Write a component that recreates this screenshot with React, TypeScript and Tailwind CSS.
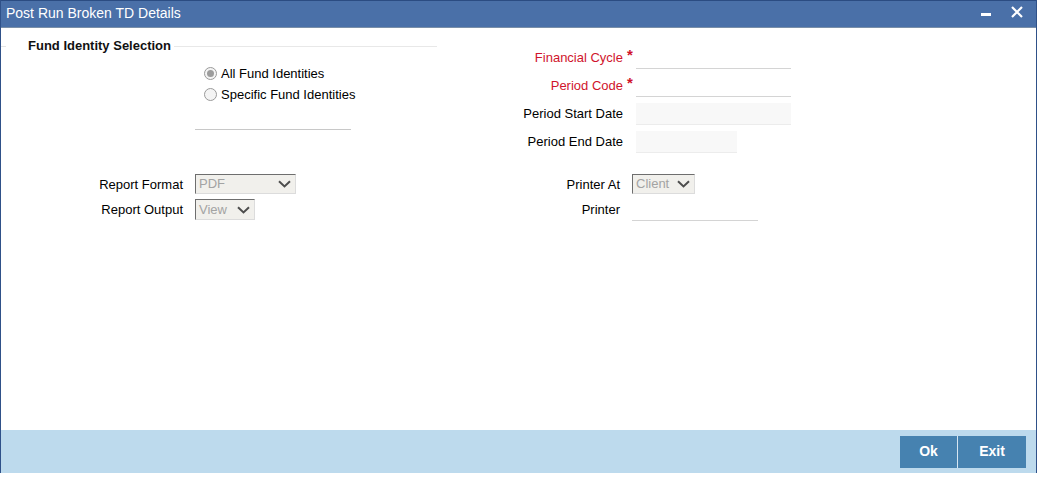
import React from 'react';

const font = { fontFamily: '"Liberation Sans", Arial, sans-serif' };

function Chevron() {
  return (
    <svg width="13" height="8" viewBox="0 0 13 8" className="shrink-0">
      <path d="M1 1.2 L6.5 6.4 L12 1.2" fill="none" stroke="#4d4d4d" strokeWidth="2" />
    </svg>
  );
}

function FakeSelect({ value, w, h }: { value: string; w: string; h: string }) {
  return (
    <div
      className={`${w} ${h} flex items-center justify-between border border-t-[#6e6e6e] border-l-[#6e6e6e] border-r-[#dcdcdc] border-b-[#dcdcdc] bg-[#f1f0ec] pl-[3px] pr-[4px] text-[13px] text-[#a3a3a3]`}
    >
      <span>{value}</span>
      <Chevron />
    </div>
  );
}

function Radio({ checked, label }: { checked?: boolean; label: string }) {
  return (
    <div className="flex h-[21px] items-center gap-[4px] text-[13px] text-black">
      <span className="flex h-[13px] w-[13px] items-center justify-center rounded-full border border-[#9a9a9a] bg-[#f4f4f4]">
        {checked && <span className="h-[7px] w-[7px] rounded-full bg-[#9c9c9c]" />}
      </span>
      {label}
    </div>
  );
}

function Star() {
  return <span className="pl-[4px] pt-[1px] text-[15px] leading-[14px] font-bold text-[#d0142c]">*</span>;
}

export default function App() {
  return (
    <div style={font} className="flex h-[483px] w-[1038px] flex-col bg-white">
      <div className="flex h-[473px] w-[1037px] flex-col border-x border-[#2f5189]">
        {/* title bar */}
        <div className="flex h-[28px] shrink-0 items-center justify-between border-t border-b border-t-[#2b4c82] border-b-[#7a8fa8] bg-[#4a70a8] pl-[5px] pr-[13px] text-[14px] text-white">
          <span className="-mt-[2px]">Post Run Broken TD Details</span>
          <div className="-mt-[4px] flex items-center gap-[20px]">
            <span className="mt-[5px] h-[3px] w-[10px] bg-white" />
            <svg width="12" height="12" viewBox="0 0 12 12">
              <path d="M1 1 L11 11 M11 1 L1 11" stroke="white" strokeWidth="2.2" />
            </svg>
          </div>
        </div>

        <div className="flex-1 pt-[10px] text-[13px]">
          {/* top section */}
          <div className="flex">
            <div className="w-[436px] shrink-0">
              <div className="flex h-[16px] items-center">
                <span className="h-px w-[5px] bg-[#e4e4e4]" />
                <span className="ml-[22px] font-bold text-[#111]">Fund Identity Selection</span>
                <span className="ml-[3px] h-px flex-1 bg-[#e8e8e8]" />
              </div>
              <div className="ml-[203px] mt-[9px] flex flex-col">
                <Radio checked label="All Fund Identities" />
                <Radio label="Specific Fund Identities" />
              </div>
              <div className="ml-[194px] mt-[24px] h-px w-[156px] bg-[#c8c8c8]" />
            </div>

            <div className="grid grid-cols-[186px_13px_155px] gap-y-[6px] pt-[9px]">
              <span className="flex h-[22px] items-center justify-end text-[#d0142c]">Financial Cycle</span>
              <Star />
              <div className="h-[22px] border-b border-[#d4d4d4]" />

              <span className="flex h-[22px] items-center justify-end text-[#d0142c]">Period Code</span>
              <Star />
              <div className="h-[22px] border-b border-[#d4d4d4]" />

              <span className="flex h-[22px] items-center justify-end text-black">Period Start Date</span>
              <span />
              <div className="h-[22px] border-b border-[#ececec] bg-[#f8f8f8]" />

              <span className="flex h-[22px] items-center justify-end text-black">Period End Date</span>
              <span />
              <div className="h-[22px] w-[101px] border-b border-[#ececec] bg-[#f8f8f8]" />
            </div>
          </div>

          {/* bottom section */}
          <div className="mt-[21px] flex">
            <div className="grid w-[436px] shrink-0 grid-cols-[182px_1fr] content-start gap-x-[12px] gap-y-[4px]">
              <span className="flex h-[21px] items-center justify-end pt-[1px] text-black">Report Format</span>
              <FakeSelect value="PDF" w="w-[101px]" h="h-[20px]" />
              <span className="flex h-[21px] items-center justify-end pt-[1px] text-black">Report Output</span>
              <FakeSelect value="View" w="w-[60px]" h="h-[21px]" />
            </div>
            <div className="grid grid-cols-[183px_1fr] content-start gap-x-[12px] gap-y-[4px]">
              <span className="flex h-[21px] items-center justify-end pt-[1px] text-black">Printer At</span>
              <FakeSelect value="Client" w="w-[63px]" h="h-[20px]" />
              <span className="flex h-[21px] items-center justify-end pt-[1px] text-black">Printer</span>
              <div className="h-[22px] w-[126px] border-b border-[#d4d4d4]" />
            </div>
          </div>
        </div>

        {/* footer */}
        <div className="flex h-[43px] shrink-0 items-center justify-end bg-[#bddaed] pr-[10px]">
          <div className="flex gap-px bg-[#d6e6f2]">
            <button className="h-[32px] w-[57px] bg-[#4682b0] text-[14px] font-bold text-white">Ok</button>
            <button className="h-[32px] w-[68px] bg-[#4682b0] text-[14px] font-bold text-white">Exit</button>
          </div>
        </div>
      </div>
    </div>
  );
}
